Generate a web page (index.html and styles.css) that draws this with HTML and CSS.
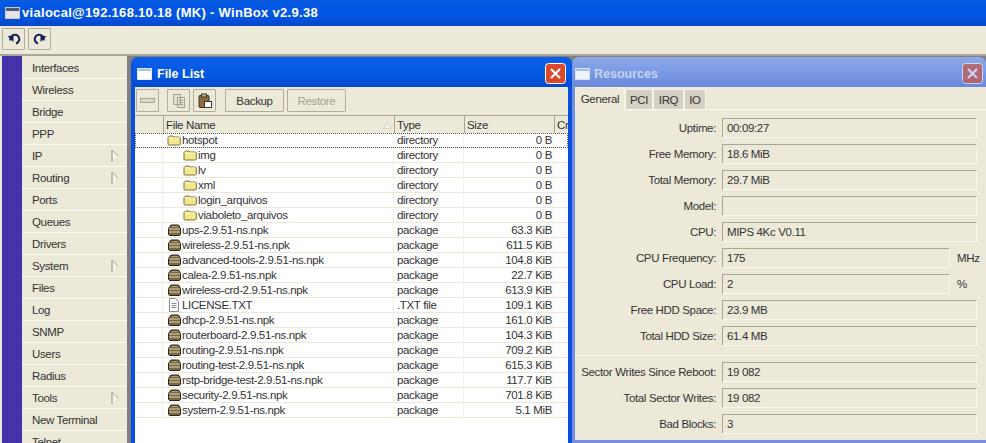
FILE: index.html
```html
<!DOCTYPE html>
<html lang="en">
<head>
<meta charset="utf-8">
<title>WinBox</title>
<link rel="stylesheet" href="styles.css">
</head>
<body>
<svg class="defs" width="0" height="0" aria-hidden="true">
  <symbol id="folder" viewBox="0 0 14 12">
    <path d="M1 3.500 2.500 2H6L7 3h5.500l.8.800v6.400l-.8.800h-11L1 10.200Z" fill="#f2e88a" stroke="#7d7144"/>
    <path d="M2 4h10.500" stroke="#fdf8c8"/>
  </symbol>
  <symbol id="pkg" viewBox="0 0 14 12">
    <path d="M1.500 4.500 4 1h7.500l2 3.500v6l-1 1H2.500l-1-1Z" fill="#7a6743" stroke="#2c2518"/>
    <path d="M4.500 2.500h6.500" stroke="#b09a6c"/>
    <path d="M2 5h11M2 8h11" stroke="#ded5b4" stroke-width="1.200"/>
  </symbol>
  <symbol id="txt" viewBox="0 0 12 14">
    <path d="M1.500.500h6l3 3v10h-9Z" fill="#fff" stroke="#8a8a8a"/>
    <path d="M3.500 5.500h5M3.500 7.500h5M3.500 9.500h5" stroke="#8a8a8a"/>
  </symbol>
  <symbol id="arrow" viewBox="0 0 8 14">
    <path d="M1 1v12l6-6Z" fill="#f6f4ea"/>
    <path d="M1 1v12" stroke="#8f8c80" fill="none"/>
    <path d="M1 1l6 6" stroke="#a9a698" fill="none"/>
  </symbol>
  <symbol id="win" viewBox="0 0 15 12">
    <rect x=".5" y=".5" width="14" height="11" fill="#fff" stroke="#dfe8fa"/>
    <rect x="1" y="1" width="13" height="2" fill="#a8c2ee"/>
  </symbol>
  <symbol id="winapp" viewBox="0 0 15 12">
    <rect x=".5" y=".5" width="14" height="11" fill="#e4e4e4" stroke="#c8c8c8"/>
    <rect x="1" y="1" width="13" height="3" fill="#4a5a78"/>
  </symbol>
  <symbol id="close" viewBox="0 0 21 21">
    <rect x=".5" y=".5" width="20" height="20" rx="3" fill="#d9492a" stroke="#fff"/>
    <path d="m6 6 9 9M15 6l-9 9" stroke="#fff" stroke-width="2.200" fill="none"/>
  </symbol>
</svg>

<header class="appbar">
  <svg width="15" height="12"><use href="#winapp"/></svg>
  <span>vialocal@192.168.10.18 (MK) - WinBox v2.9.38</span>
</header>
<div class="apptools">
  <button class="tool" type="button" aria-label="Undo">
    <svg width="14" height="12" viewBox="0 0 14 12"><path d="M3.500 7.500A4.500 4.500 0 1 1 9 10.500" fill="none" stroke="#14205c" stroke-width="2"/><path d="M0.500 3h6v6Z" fill="#14205c"/></svg>
  </button>
  <button class="tool" type="button" aria-label="Redo">
    <svg width="14" height="12" viewBox="0 0 14 12"><path d="M10.500 7.500A4.500 4.500 0 1 0 5 10.500" fill="none" stroke="#14205c" stroke-width="2"/><path d="M13.500 3h-6v6Z" fill="#14205c"/></svg>
  </button>
</div>

<main class="workspace">
  <div class="strip"></div>
  <nav class="menu">
    <a>Interfaces</a><a>Wireless</a><a>Bridge</a><a>PPP</a>
    <a>IP<svg width="8" height="14"><use href="#arrow"/></svg></a>
    <a>Routing<svg width="8" height="14"><use href="#arrow"/></svg></a>
    <a>Ports</a><a>Queues</a><a>Drivers</a>
    <a>System<svg width="8" height="14"><use href="#arrow"/></svg></a>
    <a>Files</a><a>Log</a><a>SNMP</a><a>Users</a><a>Radius</a>
    <a>Tools<svg width="8" height="14"><use href="#arrow"/></svg></a>
    <a>New Terminal</a><a>Telnet</a>
  </nav>

  <div class="desktop">
    <section class="window files">
      <div class="wintitle">
        <svg width="15" height="12"><use href="#win"/></svg>
        <span>File List</span>
        <svg class="closebtn" width="21" height="21"><use href="#close"/></svg>
      </div>
      <div class="winbody">
        <div class="filetools">
          <button class="ibtn" type="button" aria-label="Remove" disabled><span class="minus"></span></button>
          <button class="ibtn gap" type="button" aria-label="Copy" disabled>
            <svg width="14" height="16" viewBox="0 0 14 16"><path d="M1.500 1.500h7v10h-7ZM5.500 4.500h7v10h-7Z" fill="#e4e1d4" stroke="#a5a294"/><path d="M7 7.500h4M7 9.500h4M7 11.500h4" stroke="#a5a294"/></svg>
          </button>
          <button class="ibtn" type="button" aria-label="Paste">
            <svg width="14" height="16" viewBox="0 0 14 16"><rect x="1" y="2.500" width="10" height="12" rx="1" fill="#8c6d3f" stroke="#46361e"/><rect x="3.500" y="1" width="5" height="3" fill="#b8b4a4" stroke="#46361e"/><rect x="6.500" y="8.500" width="7" height="6" fill="#fff" stroke="#333"/></svg>
          </button>
          <button class="tbtn gap6" type="button">Backup</button>
          <button class="tbtn off" type="button" disabled>Restore</button>
        </div>
        <div class="listhead">
          <span class="c0"></span>
          <span class="c1">File Name<svg width="9" height="8" viewBox="0 0 9 8"><path d="M4.500.5 8.500 7.500H.5Z" fill="#f1efe6" stroke="#d8d5c8"/></svg></span>
          <span class="c2">Type</span>
          <span class="c3">Size</span>
          <span class="c4">Cr</span>
        </div>
        <div class="list">
          <div class="row focus"><span class="c0"></span><span class="c1"><svg width="14" height="12"><use href="#folder"/></svg>hotspot</span><span class="c2">directory</span><span class="c3">0 B</span></div>
          <div class="row"><span class="c0"></span><span class="c1 sub"><svg width="14" height="12"><use href="#folder"/></svg>img</span><span class="c2">directory</span><span class="c3">0 B</span></div>
          <div class="row"><span class="c0"></span><span class="c1 sub"><svg width="14" height="12"><use href="#folder"/></svg>lv</span><span class="c2">directory</span><span class="c3">0 B</span></div>
          <div class="row"><span class="c0"></span><span class="c1 sub"><svg width="14" height="12"><use href="#folder"/></svg>xml</span><span class="c2">directory</span><span class="c3">0 B</span></div>
          <div class="row"><span class="c0"></span><span class="c1 sub"><svg width="14" height="12"><use href="#folder"/></svg>login_arquivos</span><span class="c2">directory</span><span class="c3">0 B</span></div>
          <div class="row"><span class="c0"></span><span class="c1 sub"><svg width="14" height="12"><use href="#folder"/></svg>viaboleto_arquivos</span><span class="c2">directory</span><span class="c3">0 B</span></div>
          <div class="row"><span class="c0"></span><span class="c1"><svg width="14" height="12"><use href="#pkg"/></svg>ups-2.9.51-ns.npk</span><span class="c2">package</span><span class="c3">63.3 KiB</span></div>
          <div class="row"><span class="c0"></span><span class="c1"><svg width="14" height="12"><use href="#pkg"/></svg>wireless-2.9.51-ns.npk</span><span class="c2">package</span><span class="c3">611.5 KiB</span></div>
          <div class="row"><span class="c0"></span><span class="c1"><svg width="14" height="12"><use href="#pkg"/></svg>advanced-tools-2.9.51-ns.npk</span><span class="c2">package</span><span class="c3">104.8 KiB</span></div>
          <div class="row"><span class="c0"></span><span class="c1"><svg width="14" height="12"><use href="#pkg"/></svg>calea-2.9.51-ns.npk</span><span class="c2">package</span><span class="c3">22.7 KiB</span></div>
          <div class="row"><span class="c0"></span><span class="c1"><svg width="14" height="12"><use href="#pkg"/></svg>wireless-crd-2.9.51-ns.npk</span><span class="c2">package</span><span class="c3">613.9 KiB</span></div>
          <div class="row"><span class="c0"></span><span class="c1"><svg width="14" height="14"><use href="#txt"/></svg>LICENSE.TXT</span><span class="c2">.TXT file</span><span class="c3">109.1 KiB</span></div>
          <div class="row"><span class="c0"></span><span class="c1"><svg width="14" height="12"><use href="#pkg"/></svg>dhcp-2.9.51-ns.npk</span><span class="c2">package</span><span class="c3">161.0 KiB</span></div>
          <div class="row"><span class="c0"></span><span class="c1"><svg width="14" height="12"><use href="#pkg"/></svg>routerboard-2.9.51-ns.npk</span><span class="c2">package</span><span class="c3">104.3 KiB</span></div>
          <div class="row"><span class="c0"></span><span class="c1"><svg width="14" height="12"><use href="#pkg"/></svg>routing-2.9.51-ns.npk</span><span class="c2">package</span><span class="c3">709.2 KiB</span></div>
          <div class="row"><span class="c0"></span><span class="c1"><svg width="14" height="12"><use href="#pkg"/></svg>routing-test-2.9.51-ns.npk</span><span class="c2">package</span><span class="c3">615.3 KiB</span></div>
          <div class="row"><span class="c0"></span><span class="c1"><svg width="14" height="12"><use href="#pkg"/></svg>rstp-bridge-test-2.9.51-ns.npk</span><span class="c2">package</span><span class="c3">117.7 KiB</span></div>
          <div class="row"><span class="c0"></span><span class="c1"><svg width="14" height="12"><use href="#pkg"/></svg>security-2.9.51-ns.npk</span><span class="c2">package</span><span class="c3">701.8 KiB</span></div>
          <div class="row"><span class="c0"></span><span class="c1"><svg width="14" height="12"><use href="#pkg"/></svg>system-2.9.51-ns.npk</span><span class="c2">package</span><span class="c3">5.1 MiB</span></div>
        </div>
      </div>
    </section>

    <section class="window res">
      <div class="wintitle">
        <svg width="15" height="12"><use href="#win"/></svg>
        <span>Resources</span>
        <svg class="closebtn" width="21" height="21"><use href="#close"/></svg>
      </div>
      <div class="winbody">
        <div class="tabs">
          <span class="tab active">General</span><span class="tab t-pci">PCI</span><span class="tab t-irq">IRQ</span><span class="tab t-io">IO</span>
        </div>
        <div class="fields">
          <label>Uptime:</label><output class="wide">00:09:27</output>
          <label>Free Memory:</label><output class="wide">18.6 MiB</output>
          <label>Total Memory:</label><output class="wide">29.7 MiB</output>
          <label>Model:</label><output class="wide"></output>
          <label>CPU:</label><output class="wide">MIPS 4Kc V0.11</output>
          <label>CPU Frequency:</label><output>175</output><i>MHz</i>
          <label>CPU Load:</label><output>2</output><i>%</i>
          <label>Free HDD Space:</label><output class="wide">23.9 MB</output>
          <label>Total HDD Size:</label><output class="wide">61.4 MB</output>
          <hr>
          <label>Sector Writes Since Reboot:</label><output class="wide">19 082</output>
          <label>Total Sector Writes:</label><output class="wide">19 082</output>
          <label>Bad Blocks:</label><output class="wide">3</output>
        </div>
      </div>
    </section>
  </div>
</main>
</body>
</html>
```
FILE: styles.css
```css
* { box-sizing: border-box; }
html, body { margin: 0; height: 443px; overflow: hidden; }
body { background: #ece9d8; font: 11.5px "Liberation Sans", sans-serif; letter-spacing: -.35px; color: #333; }
.defs { position: absolute; }
svg { display: block; flex: none; }

.appbar {
  height: 26px; display: flex; align-items: center; gap: 2px; padding: 0 0 1px 5px;
  background: linear-gradient(#0a5bdc 0, #0458e4 12%, #0454e0 70%, #0346c8 100%);
  color: #fff; font: bold 13px "Liberation Sans", sans-serif; letter-spacing: .3px;
}
.apptools { height: 28px; padding: 2px 2px 0; display: flex; gap: 3px; }
.tool {
  width: 23px; height: 22px; padding: 0; display: flex; align-items: center; justify-content: center;
  background: #ece9d8; border: 1px solid #b0ad9f; border-radius: 1px;
}

.workspace { display: flex; height: 389px; border-top: 2px solid #a9a698; }
.strip { width: 20px; margin-left: 2px; background: #4433aa; flex: none; }
.menu { width: 104px; margin-left: 1px; flex: none; overflow: hidden; padding-top: 1px; }
.menu a {
  height: 22px; display: flex; align-items: center; justify-content: space-between;
  padding: 0 8px 0 9px; border-bottom: 1px solid #fbfaf4;
}
.desktop { flex: 1; position: relative; background: #808080; }

.window { position: absolute; top: 1px; bottom: 0; display: flex; flex-direction: column; border-radius: 7px 7px 0 0; overflow: hidden; }
.files { left: 4px; width: 441px; background: #0a50dc; padding: 0 4px 0 4px; z-index: 2; }
.res { left: 445px; width: 414px; background: #7390de; padding: 0 0 3px 3px; }
.wintitle {
  height: 30px; flex: none; display: flex; align-items: center; gap: 5px; margin-left: -2px; padding: 4px 0 0 4px;
  color: #fff; font: bold 12.5px "Liberation Sans", sans-serif; letter-spacing: 0;
}
.files .wintitle { background: linear-gradient(#0c5ee8, #0458e4 60%, #0448cc); margin-right: -4px; padding-right: 6px; }
.res .wintitle { background: linear-gradient(#8ca8e6, #7797e4 60%, #6a87d8); color: #c6d3f3; gap: 4px; padding-left: 2px; padding-right: 3px; }
.res .wintitle svg:first-child { opacity: .9; }
.closebtn { margin-left: auto; margin-top: -1px; }
.res .closebtn { opacity: .6; }
.winbody { flex: 1; background: #ece9d8; min-height: 0; }

.filetools { height: 28px; display: flex; align-items: center; padding: 0 0 1px 1px; gap: 3px; }
.ibtn, .tbtn { background: #ece9d8; border: 1px solid #b0ad9f; border-radius: 1px; height: 23px; padding: 0; font: inherit; letter-spacing: inherit; color: #333; }
.ibtn { width: 23px; display: flex; align-items: center; justify-content: center; }
.gap { margin-left: 5px; }
.gap6 { margin-left: 6px; }
.tbtn { width: 59px; }
.tbtn.off { width: 59px; color: #a5a294; }
.minus { width: 15px; height: 5px; border: 1px solid #a9a698; background: #dcd9ca; }

.listhead, .row { display: flex; }
.listhead { height: 18px; align-items: center; border-top: 1px solid #a9a698; background: #ece9d8; }
.listhead span { height: 100%; display: flex; align-items: center; border-left: 1px solid #a9a698; padding-left: 2px; }
.listhead .c0 { border-left: 0; }
.listhead .c1 svg { margin-left: auto; margin-right: 2px; }
.c0 { width: 28px; flex: none; }
.c1 { width: 231px; flex: none; display: flex; align-items: center; gap: 1px; }
.c2 { width: 70px; flex: none; padding-left: 2px; }
.c3 { width: 90px; flex: none; text-align: right; padding-right: 1px; }
.c4 { width: 14px; flex: none; overflow: hidden; }
.listhead .c3 { justify-content: flex-start; }

.list { background: #fff; height: 100%; }
.row { height: 15px; align-items: center; border-bottom: 1px solid #ece9d8; line-height: 14px; }
.row span { height: 14px; border-right: 1px solid #f3f1e8; }
.row .c1 { padding-left: 4px; }
.row .c1.sub { padding-left: 20px; }
.row.focus { outline: 1px dotted #555; outline-offset: -1px; }
.row .c2 { padding-left: 3px; }

.tabs { height: 23px; display: flex; align-items: flex-end; border-bottom: 1px solid #fbfaf4; }
.tab { height: 20px; padding-top: 3px; text-align: center; background: #d4d0c2; border: 1px solid #f6f4ea; border-bottom: 0; line-height: 15px; }
.tab.active { height: 23px; width: 50px; padding-top: 4px; background: #ece9d8; margin-bottom: -1px; }
.t-pci { width: 28px; }
.t-irq { width: 31px; }
.t-io { width: 22px; }

.fields { display: grid; grid-template-columns: 141px 228px 21px; column-gap: 6px; row-gap: 6px; padding-top: 8px; align-items: center; }
.fields label { grid-column: 1; text-align: right; white-space: nowrap; justify-self: end; }
.fields output { grid-column: 2; height: 20px; border: 1px solid; border-color: #a9a698 #f8f7f0 #f8f7f0 #a9a698; padding: 2px 4px; line-height: 14px; }
.fields output.wide { grid-column: 2 / 4; }
.fields i { grid-column: 3; font-style: normal; padding-left: 1px; white-space: nowrap; }
.fields hr { grid-column: 1 / -1; width: 100%; margin: 3px 0 0; border: 0; border-top: 1px solid #fbfaf4; height: 0; }
```
